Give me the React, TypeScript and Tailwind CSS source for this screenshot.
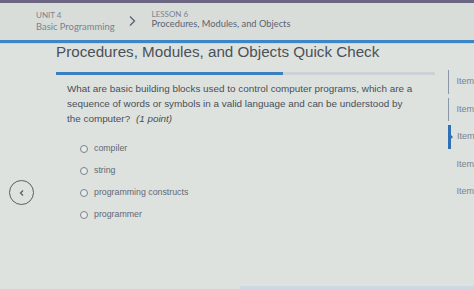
import React from "react";

const options = ["compiler", "string", "programming constructs", "programmer"];
const items = [
  { active: false, line: true },
  { active: false, line: true },
  { active: true, line: true },
  { active: false, line: false },
  { active: false, line: false },
];

export default function App() {
  return (
    <div
      className="w-[474px] h-[289px] overflow-hidden bg-[#dde2de] flex flex-col"
      style={{ fontFamily: '"Liberation Sans", Arial, sans-serif' }}
    >
      <div className="h-[3px] bg-[#6c6682] shrink-0" />
      <div
        className="h-[37px] shrink-0 bg-[#d8ddd9] flex items-center pl-[36px] text-[#7b8190]"
        style={{ fontFamily: 'Lato, "Open Sans", sans-serif' }}
      >
        <div className="flex flex-col leading-[11px] mt-[-1px]">
          <span className="text-[8px]">UNIT 4</span>
          <span className="text-[9.4px]">Basic Programming</span>
        </div>
        <svg width="10" height="12" viewBox="0 0 10 12" className="ml-[12px] mr-[15px] mt-[-2px]">
          <path d="M3 1.5 L7.5 6 L3 10.5" stroke="#5f6472" strokeWidth="1.4" fill="none" />
        </svg>
        <div className="flex flex-col leading-[10px] mt-[-5px]">
          <span className="text-[8px]">LESSON 6</span>
          <span className="text-[9.3px] text-[#5d6270]">Procedures, Modules, and Objects</span>
        </div>
      </div>
      <div className="h-[3px] bg-[#3a86c6] shrink-0" />
      <div className="h-[1px] bg-[#c9d4d6] shrink-0" />
      <div className="flex flex-1 relative">
        <div className="w-[56px] shrink-0 flex flex-col">
          <div className="h-[136px]" />
          <div className="ml-[9px] w-[25px] h-[25px] rounded-full border-[1.5px] border-[#5a5f66] flex items-center justify-center">
            <svg width="8" height="8" viewBox="0 0 8 8">
              <path d="M5 1.5 L2.5 4 L5 6.5" stroke="#555a60" strokeWidth="1.2" fill="none" />
            </svg>
          </div>
        </div>
        <div className="flex-1 flex flex-col">
          <div className="text-[15.2px] text-[#4b5059] leading-[16px] whitespace-nowrap">
            Procedures, Modules, and Objects Quick Check
          </div>
          <div className="mt-[12px] flex h-[3px] w-[379px]">
            <div className="w-[227px] bg-[#3a7fc0]" />
            <div className="flex-1 bg-[#cbd3d6]" />
          </div>
          <div className="pl-[11px] pt-[6px] text-[9.9px] leading-[15px] text-[#4a4e57] whitespace-nowrap">
            What are basic building blocks used to control computer programs, which are a
            <br />
            sequence of words or symbols in a valid language and can be understood by
            <br />
            the computer? <span className="italic ml-[3px]">(1 point)</span>
          </div>
          <div className="pl-[24px] pt-[12px] flex flex-col">
            {options.map((o) => (
              <div key={o} className="h-[22px] flex items-center gap-[6px] text-[8.8px] text-[#626876]">
                <span className="w-[8px] h-[8px] rounded-full border border-[#7c828c] bg-[#e6ebe8]" />
                <span>{o}</span>
              </div>
            ))}
          </div>
        </div>
        <div className="w-[26px] shrink-0 flex flex-col pt-[24px]">
          {items.map((it, i) => (
            <div key={i} className="h-[27.5px] flex items-center">
              <div className="w-[2px] h-full flex flex-col py-[2px] relative">
                {it.line && (
                  <div className={it.active ? "flex-1 bg-[#2f6fb4] w-[3px]" : "flex-1 bg-[#8a96a8]"} />
                )}
                {it.active && (
                  <div className="absolute left-[2px] top-[11px] w-0 h-0 border-y-[3px] border-y-transparent border-l-[3px] border-l-[#2f6fb4]" />
                )}
              </div>
              <span className="ml-[7px] text-[9px] text-[#7b8190] whitespace-nowrap">Item</span>
            </div>
          ))}
        </div>
      </div>
      <div className="h-[3px] shrink-0 flex">
        <div className="w-[240px]" />
        <div className="flex-1 bg-[#cdd8e0]" />
      </div>
    </div>
  );
}
